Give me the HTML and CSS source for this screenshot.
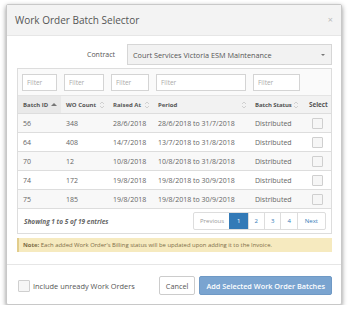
FILE: index.html
```html
<!DOCTYPE html>
<html lang="en">
<head>
    <meta charset="UTF-8">
    <title>Work Order Batch Selector</title>
    <link rel="stylesheet" href="styles.css">
</head>
<body>
    <div class="modal">
        <div class="modal-header">
            <span class="modal-title">Work Order Batch Selector</span>
            <span class="close">&times;</span>
        </div>

        <div class="modal-body">
            <div class="contract-row">
                <label class="contract-label">Contract</label>
                <div class="select">
                    <span>Court Services Victoria ESM Maintenance</span>
                    <span class="caret"></span>
                </div>
            </div>

            <div class="panel">
                <table class="grid">
                    <colgroup>
                        <col style="width: 43px">
                        <col style="width: 47px">
                        <col style="width: 45px">
                        <col style="width: 97px">
                        <col style="width: 56px">
                        <col>
                    </colgroup>
                    <thead>
                        <tr class="filter-row">
                            <td><input class="filter" placeholder="Filter"></td>
                            <td><input class="filter" placeholder="Filter"></td>
                            <td><input class="filter" placeholder="Filter"></td>
                            <td><input class="filter" placeholder="Filter"></td>
                            <td class="narrow"><input class="filter" placeholder="Filter"></td>
                            <td></td>
                        </tr>
                        <tr class="head-row">
                            <th class="sorted"><span class="th-in">Batch ID <svg class="sort" width="6" height="8" viewBox="0 0 6 8"><path d="M0 5 L3 2 L6 5 Z" fill="#777"/></svg></span></th>
                            <th><span class="th-in">WO Count <svg class="sort" width="6" height="8" viewBox="0 0 6 8"><path d="M1 3 L3 1 L5 3 M1 5 L3 7 L5 5" fill="none" stroke="#ccc" stroke-width="0.9"/></svg></span></th>
                            <th><span class="th-in">Raised At <svg class="sort" width="6" height="8" viewBox="0 0 6 8"><path d="M1 3 L3 1 L5 3 M1 5 L3 7 L5 5" fill="none" stroke="#ccc" stroke-width="0.9"/></svg></span></th>
                            <th><span class="th-in spread">Period <svg class="sort" width="6" height="8" viewBox="0 0 6 8"><path d="M1 3 L3 1 L5 3 M1 5 L3 7 L5 5" fill="none" stroke="#ccc" stroke-width="0.9"/></svg></span></th>
                            <th><span class="th-in tight">Batch Status <svg class="sort" width="6" height="8" viewBox="0 0 6 8"><path d="M1 3 L3 1 L5 3 M1 5 L3 7 L5 5" fill="none" stroke="#ccc" stroke-width="0.9"/></svg></span></th>
                            <th><span class="th-in">Select</span></th>
                        </tr>
                    </thead>
                    <tbody>
                        <tr>
                            <td>56</td><td>348</td><td>28/6/2018</td><td>28/6/2018 to 31/7/2018</td><td>Distributed</td><td class="check-cell"><span class="check"></span></td>
                        </tr>
                        <tr>
                            <td>64</td><td>408</td><td>14/7/2018</td><td>13/7/2018 to 31/8/2018</td><td>Distributed</td><td class="check-cell"><span class="check"></span></td>
                        </tr>
                        <tr>
                            <td>70</td><td>12</td><td>10/8/2018</td><td>10/8/2018 to 31/8/2018</td><td>Distributed</td><td class="check-cell"><span class="check"></span></td>
                        </tr>
                        <tr>
                            <td>74</td><td>172</td><td>19/8/2018</td><td>19/8/2018 to 30/9/2018</td><td>Distributed</td><td class="check-cell"><span class="check"></span></td>
                        </tr>
                        <tr>
                            <td>75</td><td>185</td><td>19/8/2018</td><td>19/8/2018 to 30/9/2018</td><td>Distributed</td><td class="check-cell"><span class="check"></span></td>
                        </tr>
                    </tbody>
                </table>

                <div class="panel-footer">
                    <span class="info">Showing 1 to 5 of 19 entries</span>
                    <ul class="pagination">
                        <li class="disabled">Previous</li>
                        <li class="active">1</li>
                        <li>2</li>
                        <li>3</li>
                        <li>4</li>
                        <li>Next</li>
                    </ul>
                </div>
            </div>

            <div class="note"><b>Note:</b> Each added Work Order's Billing status will be updated upon adding it to the Invoice.</div>
        </div>

        <div class="modal-footer">
            <label class="unready"><span class="check"></span>Include unready Work Orders</label>
            <button class="btn btn-default">Cancel</button>
            <button class="btn btn-primary">Add Selected Work Order Batches</button>
        </div>
    </div>
</body>
</html>
```

FILE: styles.css
```css
body {
    margin: 0;
    padding: 4px 8px 0 6px;
    background: #fff;
    font-family: 'Open Sans', sans-serif;
    color: #555;
}

.modal {
    width: 334px;
    background: #fff;
    border: 1px solid #c8c8c8;
    border-radius: 2px;
    box-shadow: 0 2px 5px rgba(0,0,0,0.45);
}

.modal-header {
    height: 30px;
    display: flex;
    align-items: center;
    justify-content: space-between;
    padding: 0 8px 0 8px;
    background: #f3f3f3;
    border-bottom: 1px solid #e6e6e6;
}

.modal-title {
    font-size: 10px;
    color: #555;
}

.close {
    font-size: 9px;
    color: #bbb;
    margin-top: -2px;
}

.modal-body {
    padding: 8px 9px 12px 10px;
}

.contract-row {
    display: grid;
    grid-template-columns: 98px 1fr;
    column-gap: 12px;
    align-items: center;
}

.contract-label {
    text-align: right;
    font-size: 7px;
    color: #555;
}

.select {
    height: 19px;
    display: flex;
    align-items: center;
    justify-content: space-between;
    padding: 0 6px 0 5px;
    background: #f2f2f2;
    border: 1px solid #d6d6d6;
    font-size: 7.3px;
    color: #555;
}

.caret {
    width: 0;
    height: 0;
    border-left: 2px solid transparent;
    border-right: 2px solid transparent;
    border-top: 2.5px solid #777;
}

.panel {
    margin-top: 3px;
    border: 1px solid #ddd;
}

.grid {
    width: 100%;
    border-collapse: collapse;
    table-layout: fixed;
    font-size: 7px;
}

.filter-row td {
    height: 26px;
    padding: 0 4px 0 3px;
    background: #fafafa;
    vertical-align: middle;
}

.filter-row td:first-child {
    padding-left: 4px;
}

.filter-row td.narrow {
    padding-right: 6px;
}

.filter {
    display: block;
    width: 100%;
    height: 17px;
    box-sizing: border-box;
    border: 1px solid #d4d4d4;
    background: #fff;
    padding: 0 4px;
    font-family: 'Open Sans', sans-serif;
    font-size: 6.5px;
    outline: none;
}

.filter::placeholder {
    color: #aaa;
}

.head-row th {
    height: 17px;
    padding: 0 0 0 5px;
    text-align: left;
    background: #f2f2f2;
    border-top: 1px solid #e4e4e4;
}

.head-row th.sorted {
    background: #e9e9e9;
}

.th-in {
    display: flex;
    align-items: center;
    gap: 3px;
    font-size: 6px;
    font-weight: 700;
    color: #555;
    white-space: nowrap;
}

.th-in.spread {
    justify-content: space-between;
    padding-right: 3px;
}

.th-in.tight {
    gap: 1px;
    letter-spacing: -0.1px;
}

.head-row th:last-child {
    padding-left: 3px;
}

.head-row th:last-child .th-in {
    font-size: 6.3px;
}

.sort {
    flex: none;
}

.grid tbody td {
    height: 18px;
    padding: 0 0 0 5px;
    border-top: 1px solid #ddd;
    color: #666;
    white-space: nowrap;
}

.grid tbody td.check-cell {
    padding-left: 3px;
}

.grid tbody tr:nth-child(odd) td {
    background: #f8f8f8;
}

.check {
    display: inline-block;
    width: 9px;
    height: 9px;
    margin-left: 3px;
    vertical-align: middle;
    border: 1px solid #cfcfcf;
    border-radius: 1px;
    background: #f6f6f6;
}

.panel-footer {
    height: 24px;
    display: flex;
    align-items: center;
    justify-content: space-between;
    padding: 0 5px 0 6px;
    border-top: 1px solid #ddd;
}

.info {
    font-size: 6.5px;
    font-weight: 700;
    font-style: italic;
    color: #666;
}

.pagination {
    display: flex;
    margin: 0;
    padding: 0;
    list-style: none;
    border: 1px solid #ddd;
    border-radius: 2px;
    font-size: 6px;
}

.pagination li {
    height: 16px;
    line-height: 16px;
    padding: 0 6px;
    color: #337ab7;
    border-left: 1px solid #ddd;
}

.pagination li:first-child {
    border-left: none;
    padding: 0 5px 0 6px;
}

.pagination li:last-child {
    padding: 0 7px;
}

.pagination li.disabled {
    color: #999;
}

.pagination li.active {
    padding: 0 7px;
    background: #337ab7;
    color: #fff;
    border-left-color: #337ab7;
}

.note {
    margin-top: 4px;
    padding: 3px 4px;
    background: #f6eabf;
    border-left: 2px solid #e2cd8c;
    font-size: 5.9px;
    line-height: 8px;
    color: #7c6d47;
}

.modal-footer {
    display: flex;
    align-items: center;
    gap: 4px;
    padding: 11px 9px 9px 11px;
    border-top: 1px solid #e6e6e6;
}

.unready {
    flex: 1;
    display: flex;
    align-items: center;
    font-size: 7.4px;
    color: #555;
}

.unready .check {
    width: 10px;
    height: 10px;
    margin: 0 3px 0 0;
}

.btn {
    height: 19px;
    padding: 0 6px;
    font-family: 'Open Sans', sans-serif;
    font-size: 7.3px;
    border-radius: 2px;
    cursor: pointer;
}

.btn-default {
    background: #fff;
    border: 1px solid #ccc;
    color: #555;
}

.btn-primary {
    background: #7aa4d0;
    border: 1px solid #6f99c5;
    color: #fff;
    font-weight: 600;
}
```
